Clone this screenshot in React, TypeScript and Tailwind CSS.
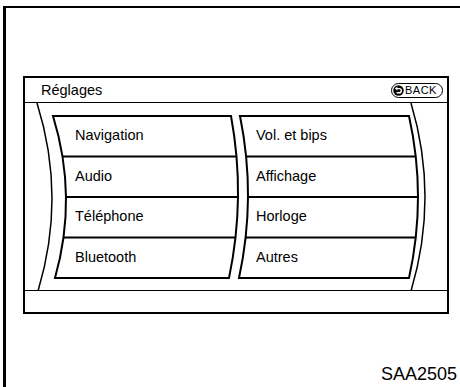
import React from 'react';

// curve edges are quadratic: [top x, control x, bottom x]
type Edge = [number, number, number];

const TOP = 116;
const BOTTOM = 278;

const qx = (e: Edge, t: number) =>
  (1 - t) * (1 - t) * e[0] + 2 * t * (1 - t) * e[1] + t * t * e[2];

const MenuBox: React.FC<{ left: Edge; right: Edge }> = ({ left, right }) => {
  const mid = (TOP + BOTTOM) / 2;
  const d = `M${left[0]} ${TOP} L${right[0]} ${TOP} Q${right[1]} ${mid} ${right[2]} ${BOTTOM} L${left[2]} ${BOTTOM} Q${left[1]} ${mid} ${left[0]} ${TOP} Z`;
  const seps = [0.25, 0.5, 0.75];
  return (
    <g>
      <path d={d} fill="none" stroke="#000" strokeWidth={2} strokeLinejoin="miter" />
      {seps.map((t) => {
        const y = TOP + (BOTTOM - TOP) * t;
        return (
          <line
            key={t}
            x1={qx(left, t)}
            y1={y}
            x2={qx(right, t)}
            y2={y}
            stroke="#000"
            strokeWidth={2}
          />
        );
      })}
    </g>
  );
};

const BackButton: React.FC = () => (
  <div className="flex h-[15px] w-[52px] items-center rounded-full border-[1.5px] border-black pl-[1px]">
    <svg width="11" height="11" viewBox="0 0 11 11">
      <circle cx="5.5" cy="5.5" r="5.2" fill="#000" />
      <path d="M4 3.6 H6.2 A2.1 2.1 0 0 1 6.2 7.8 H3.6" fill="none" stroke="#fff" strokeWidth="1.4" />
      <polygon points="1.8,3.6 4.4,1.7 4.4,5.5" fill="#fff" />
    </svg>
    <span className="ml-[1px] text-[11px] leading-none tracking-[0.5px] text-black">BACK</span>
  </div>
);

const leftItems = ['Navigation', 'Audio', 'Téléphone', 'Bluetooth'];
const rightItems = ['Vol. et bips', 'Affichage', 'Horloge', 'Autres'];

const App: React.FC = () => {
  return (
    <div className="h-[387px] w-[460px] overflow-hidden bg-white font-['Liberation_Sans',Arial,sans-serif] text-black">
      {/* outer frame */}
      <div className="ml-[3px] mt-[6px] h-[381px] border-l-[3px] border-t-2 border-black pl-[17px] pt-[68px]">
        {/* screen */}
        <div className="flex h-[238px] w-[426px] flex-col border-2 border-black">
          <div className="flex h-[25px] items-center justify-between border-b border-black pl-[16px] pr-[4px]">
            <span className="text-[14.5px] leading-none">Réglages</span>
            <BackButton />
          </div>

          <div className="relative flex-1">
            <svg
              className="absolute inset-0"
              width="422"
              height="187"
              viewBox="25 103 422 187"
            >
              <path d="M37 103 Q66.5 197 38 291" fill="none" stroke="#000" strokeWidth={1.5} />
              <path d="M411 103 Q439 197 411 291" fill="none" stroke="#000" strokeWidth={1.5} />
              <MenuBox left={[53, 78, 55]} right={[231, 246, 229]} />
              <MenuBox left={[240, 256.5, 239]} right={[409, 427, 409]} />
            </svg>

            <div className="relative grid h-[175px] grid-cols-[231px_1fr] grid-rows-[repeat(4,40.5px)] pt-[13px] text-[14.5px]">
              {leftItems.map((label, i) => (
                <React.Fragment key={label}>
                  <div className="flex items-center pl-[50px]">{label}</div>
                  <div className="flex items-center">{rightItems[i]}</div>
                </React.Fragment>
              ))}
            </div>
          </div>

          <div className="h-[22px] border-t border-black" />
        </div>

        <div className="mt-[51px] pr-[3px] text-right text-[18px] leading-[18px]">SAA2505</div>
      </div>
    </div>
  );
};

export default App;
